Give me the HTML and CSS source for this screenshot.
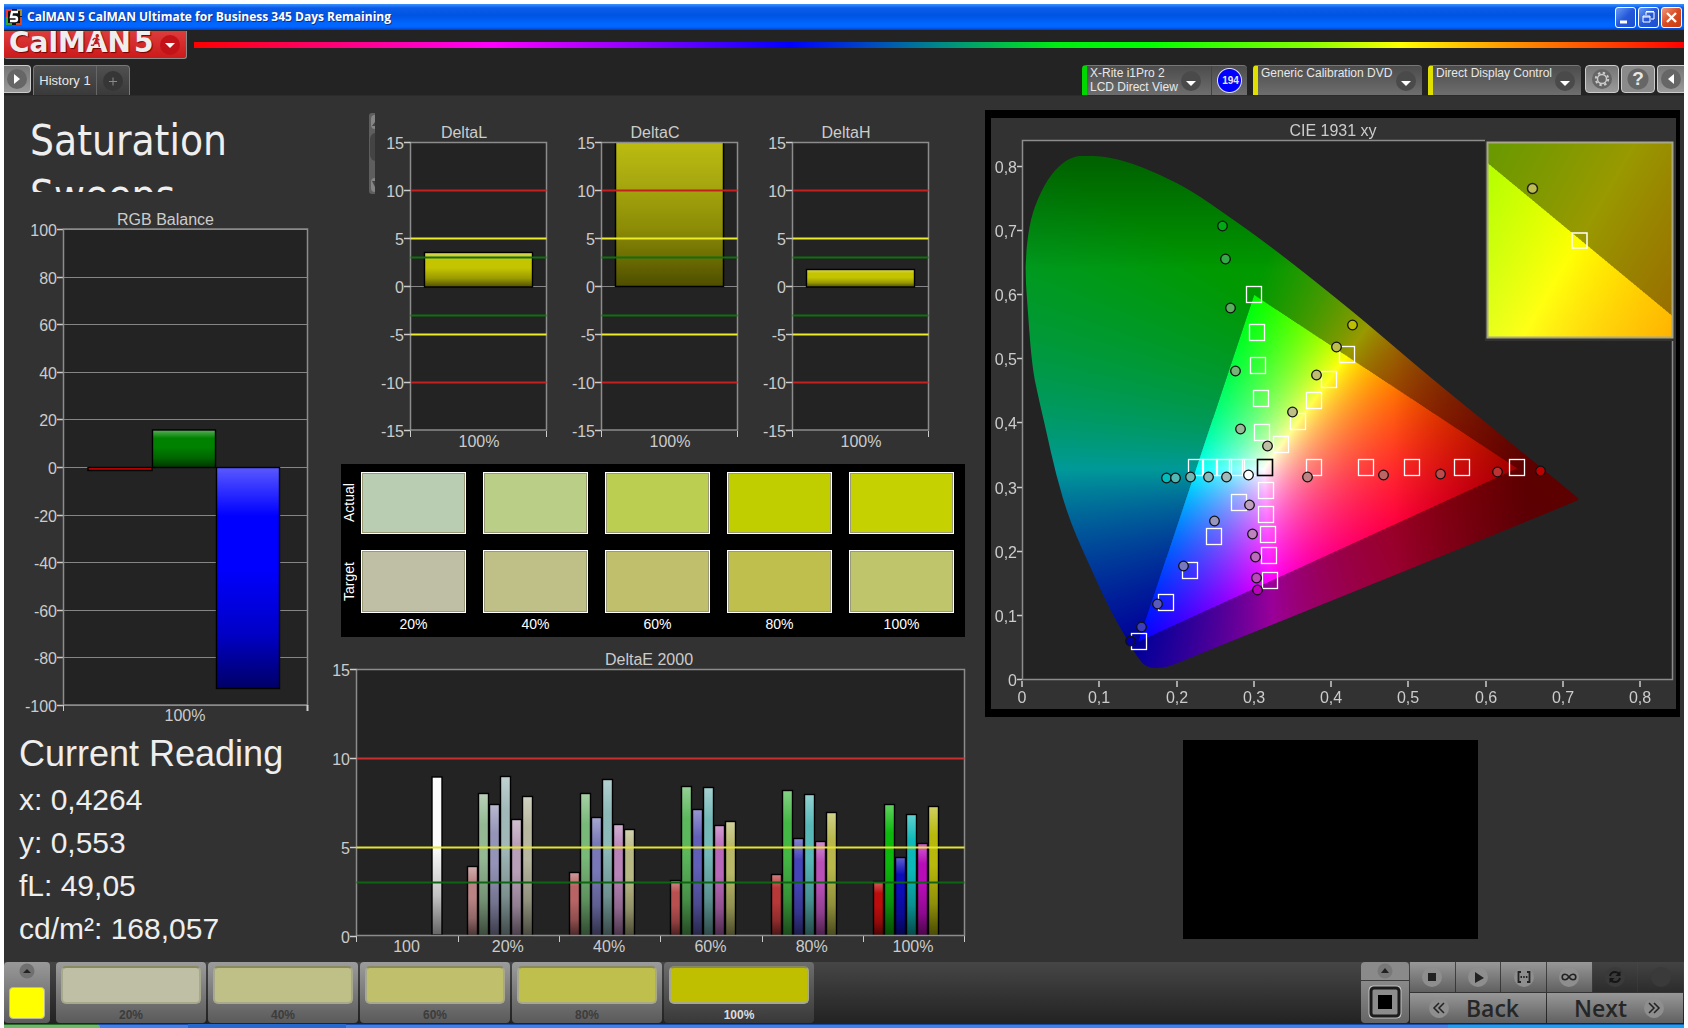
FILE: index.html
```html
<!DOCTYPE html>
<html lang="en">
<head>
<meta charset="utf-8">
<title>CalMAN 5</title>
<link rel="stylesheet" href="styles.css">
</head>
<body>
<div class="window">
  <header class="titlebar">
    <svg class="app-icon" viewBox="0 0 16 16"><rect width="16" height="16" fill="#111"/><path d="M0 0h6v2H2v6H0z" fill="#e33"/><path d="M0 8h2v6h4v2H0z" fill="#3a3"/><path d="M16 8h-2v6h-4v2h6z" fill="#d42"/><path d="M16 0h-5v2h3v5h2z" fill="#a82"/><path d="M12 3H6L5 8h4q2 0 2 2t-2 2H4" fill="none" stroke="#fff" stroke-width="2.4"/></svg>
    <h1 class="titlebar-text">CalMAN 5 CalMAN Ultimate for Business 345 Days Remaining</h1>
    <button class="win-btn" aria-label="Minimize"><svg viewBox="0 0 21 21"><path d="M5 15h7" stroke="#fff" stroke-width="3"/></svg></button>
    <button class="win-btn" aria-label="Restore"><svg viewBox="0 0 21 21" fill="none" stroke="#fff"><path d="M8 8V5h8v7h-3M8 4.500h8"/><path d="M5 9h7v6H5zM5 10h7"/></svg></button>
    <button class="win-btn win-close" aria-label="Close"><svg viewBox="0 0 21 21"><path d="M6 6l9 9M15 6l-9 9" stroke="#fff" stroke-width="2.400"/></svg></button>
  </header>

  <div class="brandbar">
    <button class="logo"><span class="logo-text">CalMAN</span><span class="logo-five">5</span>
      <svg class="runner" viewBox="0 0 14 16" fill="none" stroke="#c8201e" stroke-width="1.600"><circle cx="8.500" cy="2" r="1.300" fill="#c8201e"/><path d="M8 4L6 9l4 2 1 4M6 9l-2 4H1M3 7l2-2h3l3 2"/></svg>
      <svg class="round-arrow" viewBox="0 0 20 20"><circle cx="10" cy="10" r="10" fill="#c41219"/><path d="M5 8h10l-5 5z" fill="#fff"/></svg>
    </button>
    <div class="rainbow"></div>
  </div>

  <nav class="tabbar">
    <button class="sq-btn sq-left" aria-label="Expand"><svg viewBox="0 0 20 20"><circle cx="10" cy="10" r="10" fill="#666"/><path d="M7 5v10l6-5z" fill="#fff"/></svg></button>
    <div class="tabs">
      <button class="tab">History 1</button>
      <button class="tab tab-add" aria-label="Add"><svg viewBox="0 0 20 20"><circle cx="10" cy="10" r="10" fill="#363636"/><path d="M6 10.500h8M10 6.500v8" stroke="#8a8a8a"/></svg></button>
    </div>
    <div class="device device-meter">
      <button class="device-name">X-Rite i1Pro 2<br>LCD Direct View</button>
      <svg class="drop" viewBox="0 0 20 22"><circle cx="10" cy="10" r="10" fill="#4a4a4a"/><path d="M5 10h10l-5 5z" fill="#fff"/></svg>
      <span class="badge">194</span>
    </div>
    <div class="device device-source">
      <button class="device-name">Generic Calibration DVD</button>
      <svg class="drop" viewBox="0 0 20 22"><circle cx="10" cy="10" r="10" fill="#4a4a4a"/><path d="M5 10h10l-5 5z" fill="#fff"/></svg>
    </div>
    <div class="device device-display">
      <button class="device-name">Direct Display Control</button>
      <svg class="drop" viewBox="0 0 20 22"><circle cx="10" cy="10" r="10" fill="#4a4a4a"/><path d="M5 10h10l-5 5z" fill="#fff"/></svg>
    </div>
    <button class="sq-btn" aria-label="Settings"><svg viewBox="0 0 20 20"><circle cx="10" cy="10" r="10" fill="#666"/><circle cx="10" cy="10" r="4.500" fill="none" stroke="#ccc" stroke-width="1.500"/><circle cx="10" cy="10" r="6.200" fill="none" stroke="#ccc" stroke-width="2" stroke-dasharray="2.400 2.470"/></svg></button>
    <button class="sq-btn sq-help" aria-label="Help">?</button>
    <button class="sq-btn sq-right" aria-label="Collapse"><svg viewBox="0 0 20 20"><circle cx="10" cy="10" r="10" fill="#666"/><path d="M13 5v10l-6-5z" fill="#fff"/></svg></button>
  </nav>

  <main class="workspace">
    <section class="col-left">
      <h2 class="page-title">Saturation<br>Sweeps</h2>
      <svg id="rgb-balance" class="chart" viewBox="4 205 337 525"></svg>
      <div class="reading">
        <h3>Current Reading</h3>
        <p>x: 0,4264</p>
        <p>y: 0,553</p>
        <p>fL: 49,05</p>
        <p>cd/m²: 168,057</p>
      </div>
    </section>

    <section class="col-mid">
      <div class="deltas">
        <svg class="mini-scroll" viewBox="0 0 6 81"><rect width="10" height="81" rx="3" fill="#5e5e5e"/><rect x="2" y="2" width="10" height="14" rx="4" fill="#858585"/><path d="M6 9v4H3z" fill="#444"/><rect x="1" y="20" width="12" height="28" rx="6" fill="#444"/><rect x="2" y="65" width="10" height="14" rx="4" fill="#858585"/><path d="M6 68v6l-3-6z" fill="#444"/></svg>
        <svg id="delta-l" class="chart" viewBox="375 113 191 351"></svg>
        <svg id="delta-c" class="chart" viewBox="375 113 191 351"></svg>
        <svg id="delta-h" class="chart" viewBox="375 113 191 351"></svg>
      </div>
      <div class="patches">
        <span class="row-label">Actual</span>
        <i class="patch p1"></i><i class="patch p2"></i><i class="patch p3"></i><i class="patch p4"></i><i class="patch p5"></i>
        <span class="row-label">Target</span>
        <i class="patch t1"></i><i class="patch t2"></i><i class="patch t3"></i><i class="patch t4"></i><i class="patch t5"></i>
        <span></span>
        <span class="col-label">20%</span><span class="col-label">40%</span><span class="col-label">60%</span><span class="col-label">80%</span><span class="col-label">100%</span>
      </div>
      <svg id="delta-e" class="chart chart-wide" viewBox="341 645 624 317"></svg>
    </section>

    <section class="col-right">
      <div class="cie-panel">
        <svg id="cie" class="chart" viewBox="991 118 685 591">
          <foreignObject x="1023" y="141" width="650" height="539"><canvas id="gamut" class="gamut" width="650" height="539"></canvas></foreignObject>
          <g id="cie-axes"></g>
          <g id="cie-marks"></g>
          <rect x="1485" y="138" width="191" height="203" fill="#323232"/>
          <foreignObject x="1488" y="143" width="184" height="194"><canvas id="inset" class="gamut" width="184" height="194"></canvas></foreignObject>
          <rect x="1487.500" y="142.500" width="185" height="195" fill="none" stroke="#a8a888" stroke-width="2"/>
          <circle cx="1532.500" cy="188.500" r="5" fill="#bebe50" stroke="#222" stroke-width="1.500"/>
          <rect x="1572" y="233" width="15" height="15" fill="none" stroke="#fff" stroke-width="1.500"/>
        </svg>
      </div>
      <div class="preview"></div>
    </section>
  </main>

  <footer class="dock">
    <button class="picker" aria-label="Pattern color"><svg viewBox="0 0 16 16"><circle cx="8" cy="8" r="7.500" fill="#707070"/><path d="M4 10h8L8 6z" fill="#222"/></svg><i class="picker-color"></i></button>
    <button class="level"><i class="level-color t1"></i>20%</button>
    <button class="level"><i class="level-color t2"></i>40%</button>
    <button class="level"><i class="level-color t3"></i>60%</button>
    <button class="level"><i class="level-color t4"></i>80%</button>
    <button class="level level-on"><i class="level-color l5"></i>100%</button>
    <div class="transport">
      <div class="window-size">
        <button class="up" aria-label="More"><svg viewBox="0 0 16 16"><circle cx="8" cy="8" r="7.500" fill="#787878"/><path d="M4 10h8L8 5z" fill="#222"/></svg></button>
        <button class="pattern" aria-label="Pattern window"><svg viewBox="0 0 34 34"><rect x="1" y="1" width="32" height="32" rx="4" fill="#a2a2a2" stroke="#c4c4c4"/><rect x="3" y="3" width="28" height="28" rx="3" fill="#8d8d8d" stroke="#1c1c1c" stroke-width="3"/><rect x="10" y="10" width="14" height="14" fill="#000"/></svg></button>
      </div>
      <div class="controls">
        <button class="ctl" aria-label="Stop"><svg viewBox="0 0 20 20"><circle cx="10" cy="10" r="10"/><path d="M6 6h8v8H6z" fill="#222"/></svg></button>
        <button class="ctl" aria-label="Read"><svg viewBox="0 0 20 20"><circle cx="10" cy="10" r="10"/><path d="M7 5v11l9-5z" fill="#222"/></svg></button>
        <button class="ctl" aria-label="Read series"><svg viewBox="0 0 20 20"><circle cx="10" cy="10" r="10"/><path d="M7 5H4.500v10H7M13 5h2.500v10H13" fill="none" stroke="#222" stroke-width="1.800"/><path d="M6.500 10h7" stroke="#222" stroke-width="2" stroke-dasharray="1.500 1.200"/></svg></button>
        <button class="ctl" aria-label="Continuous"><svg viewBox="0 0 20 20"><circle cx="10" cy="10" r="10"/><path d="M10 10q-2-2.800-4-2.800a2.800 2.800 0 0 0 0 5.600q2 0 4-2.800t4-2.800a2.800 2.800 0 0 1 0 5.600q-2 0-4-2.800z" fill="none" stroke="#222" stroke-width="1.600"/></svg></button>
        <button class="ctl ctl-off" aria-label="Refresh"><svg viewBox="0 0 20 20"><circle cx="10" cy="10" r="10"/><path d="M5 9q1-4 5-4 3 0 4 2M15 11q-1 4-5 4-3 0-4-2" fill="none" stroke="#151515" stroke-width="2"/><path d="M15.500 4v5h-5zM4.500 16v-5h5z" fill="#151515"/></svg></button>
        <button class="ctl ctl-off" aria-label="Record"><svg viewBox="0 0 20 20"><circle cx="10" cy="10" r="10"/></svg></button>
        <button class="step step-back"><svg viewBox="0 0 20 20"><circle cx="10" cy="10" r="10"/><path d="M10 5l-5 5 5 5M15 5l-5 5 5 5" fill="none" stroke="#222" stroke-width="1.500"/></svg>Back</button>
        <button class="step step-next">Next<svg viewBox="0 0 20 20"><circle cx="10" cy="10" r="10"/><path d="M5 5l5 5-5 5M10 5l5 5-5 5" fill="none" stroke="#222" stroke-width="1.500"/></svg></button>
      </div>
    </div>
  </footer>
  <div class="taskbar"><i class="start"></i><i class="task"></i><i class="tray"></i></div>
</div>
<script src="charts.js"></script>
</body>
</html>
```

FILE: styles.css
```css
* { box-sizing: border-box; }
body { margin: 0; background: #fff; font-family: "Liberation Sans", Arial, sans-serif; color: #e8e8e8; }
button { font: inherit; color: inherit; border: 0; margin: 0; padding: 0; background: none; }
svg { display: block; }
h1, h2, h3, p { margin: 0; font-weight: normal; }

.window { min-height: 100vh; padding: 4px 4px 0; display: flex; flex-direction: column; background: #fff; }

.titlebar { height: 26px; display: flex; align-items: center; gap: 2px; padding: 0 2px; background: linear-gradient(#3a93ff 0, #0a5ce8 15%, #0054e3 45%, #0066ff 75%, #0066ff 88%, #0040c8 100%); }
.app-icon { width: 16px; height: 16px; }
.titlebar-text { flex: 1; padding-left: 3px; font: bold 12px/20px "Open Sans", "Noto Sans", sans-serif; color: #fff; text-shadow: 1px 1px #10308a; white-space: nowrap; }
.win-btn { width: 21px; height: 21px; border: 1px solid #fff; border-radius: 3px; background: linear-gradient(135deg, #6a9cf5, #2458d8 50%, #1c50d0); }
.win-btn svg { margin: -1px; width: 21px; height: 21px; }
.win-close { background: linear-gradient(135deg, #f09a80, #d84a20 50%, #c83c10); }

.brandbar { height: 35px; background: #232323; display: flex; align-items: flex-start; gap: 7px; }
.logo { position: relative; width: 183px; height: 28px; margin-top: 1px; padding: 0 6px 0 5px; display: flex; align-items: center; overflow: hidden; border: solid #8a8a8a; border-width: 0 1px 1px 0; border-radius: 0 0 3px 3px; background: linear-gradient(#dc3c3c, #cc1a1a); font: bold 28px/22px "DejaVu Sans", sans-serif; color: #eee; text-shadow: 1px 1px 1px #700; }
.logo-text, .logo-five { margin-top: -3px; }
.logo-five { padding-left: 3px; }
.round-arrow { width: 20px; height: 20px; margin-left: auto; }
.runner { position: absolute; left: 86px; top: 3px; width: 12px; height: 14px; }
.rainbow { flex: 1; height: 6px; margin-top: 12px; background: linear-gradient(90deg, #f00, #f0f 20%, #80f 30%, #00f 40%, #088 50%, #0e1 58%, #0f0 64%, #8f0 75%, #ff0 81%, #f90 88%, #f00); }

.tabbar { height: 31px; background: #232323; border-bottom: 1px solid #2b2b2b; display: flex; align-items: flex-start; }
.sq-btn { width: 34px; height: 28px; margin-left: 2px; border: 1px solid #ccc; border-radius: 4px; background: linear-gradient(#757575, #9a9a9a); display: flex; align-items: center; justify-content: center; }
.sq-btn svg { width: 20px; height: 20px; }
.sq-help { font: bold 19px/20px "Liberation Sans", sans-serif; background: radial-gradient(circle, #666 10px, #8a8a8a 11px); }
.sq-left { width: 27px; margin-left: 0; border-left: 0; border-radius: 0 4px 4px 0; }
.sq-right { width: 27px; border-right: 0; border-radius: 4px 0 0 4px; }
.tabs { display: flex; height: 30px; margin: 0 auto 0 2px; border: 1px solid #777; border-bottom: 0; border-radius: 4px 4px 0 0; background: linear-gradient(#505050, #3a3a3a); }
.tab { width: 62px; font-size: 13px; }
.tab-add { width: 33px; border-left: 1px solid #666; display: flex; align-items: center; justify-content: center; }
.tab-add svg { width: 20px; height: 20px; }
.device { height: 30px; display: flex; border-top: 1px solid #777; border-left: 5px solid #e0e000; border-radius: 4px 4px 0 0; background: linear-gradient(#4c4c4c, #6e6e6e); font-size: 12px; line-height: 14px; }
.device-name { flex: 1; padding-left: 3px; text-align: left; align-self: flex-start; white-space: nowrap; }
.drop { flex: none; width: 20px; height: 22px; margin: 5px 6px 0 0; }
.device-meter { width: 165px; border-left-color: #00d800; }
.device-meter .drop { margin-right: 8px; }
.device-source { width: 169px; margin-left: 6px; }
.device-display { width: 153px; margin: 0 2px 0 6px; }
.badge { width: 36px; margin-left: 2px; padding-left: 2px; border-left: 1px solid #444; display: flex; align-items: center; justify-content: center; font-size: 10px; font-weight: bold; background: radial-gradient(circle, #00f 11px, #ddf 12px, transparent 13px); }

.workspace { flex: 1; background: #323232; display: grid; grid-template-columns: minmax(0, 337fr) minmax(0, 624fr) minmax(0, 715fr); padding: 0 4px 0 0; }
.chart { width: 100%; height: auto; overflow: visible; }
.chart text { font-size: 16px; fill: #ccc; }
.page-title { height: 96px; margin-bottom: 13px; padding: 17px 0 0 26px; overflow: hidden; font: 42px/55px "DejaVu Sans Condensed", "Noto Sans", sans-serif; color: #eee; }
.reading { padding-left: 15px; font-size: 30px; line-height: 43px; color: #eee; }
.reading h3 { font-size: 36px; line-height: 48px; }

.deltas { display: flex; align-items: flex-start; padding: 17px 17px 0 28px; }
.deltas .chart { flex: 1; min-width: 0; }
.mini-scroll { width: 6px; height: 81px; flex: none; }
.patches { display: grid; grid-template: 62px 63px 22px / 3px repeat(5, minmax(0, 1fr)); gap: 16px 17px; padding: 8px 11px 0 0; background: #000; color: #fff; font-size: 14px; height: 173px; }
.row-label { writing-mode: vertical-rl; rotate: 180deg; width: 16px; line-height: 16px; text-align: center; }
.patch { border: 1px solid #fff; box-shadow: inset 0 0 0 1px #9a9a78; }
.col-label { text-align: center; line-height: 20px; margin-top: -15px; }
.p1 { background: #b9cdb3; }
.p2 { background: #bbce88; }
.p3 { background: #bcce52; }
.p4 { background: #c0ce00; }
.p5 { background: #c5d100; }
.t1 { background: #bfbfa5; }
.t2 { background: #bfbf88; }
.t3 { background: #bfbf6c; }
.t4 { background: #bfbf4e; }
.t5 { background: #bfc56a; }
.l5 { background: #bfbf00; }
.chart-wide { margin-top: 8px; }

.col-right { padding: 14px 0 0 20px; }
.cie-panel { border: solid #000; border-width: 8px 4px 8px 6px; }
.gamut { display: block; width: 100%; height: 100%; }
.preview { width: 42.4%; aspect-ratio: 294 / 199; margin: 23px 0 0 28.5%; background: #000; }

.dock { height: 62px; padding-bottom: 1px; display: flex; gap: 2px; background: linear-gradient(#464646, #222); font: bold 12px/16px "Liberation Sans", sans-serif; color: #3c3c3c; }
.picker { width: 46px; margin-right: 4px; border-radius: 4px; background: linear-gradient(#999, #5c5c5c); display: flex; flex-direction: column; align-items: center; }
.picker svg { width: 16px; height: 16px; margin: 1px 0 8px; }
.picker-color { width: 36px; height: 32px; border: 1px solid #b8b8a0; border-radius: 4px; background: #ff0; }
.level { width: 150px; padding: 4px 5px 0; border-radius: 4px; background: linear-gradient(#9c9c9c, #5a5a5a); }
.level-color { display: block; height: 38px; margin-bottom: 3px; border: 2px solid #a8a88c; border-top-color: #8a8a60; border-radius: 5px; }
.level-on { background: linear-gradient(#6e6e6e, #383838); color: #ddd; }
.transport { margin-left: auto; display: flex; gap: 1px; padding-right: 1px; }
.window-size { width: 48px; display: flex; flex-direction: column; gap: 1px; }
.up, .pattern { display: flex; align-items: center; justify-content: center; background: #8a8a8a; }
.up { height: 18px; border-radius: 4px 4px 0 0; }
.up svg { width: 16px; height: 16px; }
.pattern { flex: 1; border-radius: 0 0 4px 4px; background: linear-gradient(#8a8a8a, #666); }
.pattern svg { width: 34px; height: 34px; }
.controls { display: grid; grid-template-columns: repeat(6, 1fr); grid-template-rows: 30px 30px; gap: 1px; width: 273px; }
.ctl, .step { display: flex; align-items: center; justify-content: center; background: linear-gradient(#989898, #606060); fill: #8e8e8e; }
.ctl svg, .step svg { width: 20px; height: 20px; }
.ctl-off { background: linear-gradient(#434343, #2c2c2c); fill: #3a3a3a; }
.step { grid-column: span 3; gap: 17px; font: 600 23px/28px "Open Sans", sans-serif; color: #262626; }
.step-back { padding-right: 8px; }
.step-next { padding-left: 8px; }
.taskbar { height: 4px; display: flex; background: linear-gradient(#1c4ca8 1px, #3c82ea 1px); }
.start { width: 96px; background: linear-gradient(#2a6a2a 1px, #6aba6a 1px); border-radius: 0 4px 0 0; }
.task { width: 158px; margin-left: 88px; background: #2468d0; }
.tray { width: 236px; margin-left: auto; background: linear-gradient(#1060b0 1px, #18a0f4 1px); }
```

FILE: charts.js
```js
const NS = 'http://www.w3.org/2000/svg';

function add(parent, name, attrs, text) {
  const el = document.createElementNS(NS, name);
  for (const k in attrs) el.setAttribute(k, attrs[k]);
  if (text !== undefined) el.textContent = text;
  parent.appendChild(el);
  return el;
}
const line = (p, x1, y1, x2, y2, stroke, w) =>
  add(p, 'line', { x1, y1, x2, y2, stroke, 'stroke-width': w || 1 });
const label = (p, x, y, text, anchor) =>
  add(p, 'text', { x, y, 'text-anchor': anchor || 'middle' }, text);

// glossy vertical shading laid over every bar
function shade(svg) {
  const id = svg.id + '-shade';
  const g = add(add(svg, 'defs', {}), 'linearGradient', { id, x1: 0, y1: 0, x2: 0, y2: 1 });
  [[0, '#fff', .35], [.22, '#fff', 0], [.45, '#000', 0], [.75, '#000', .22], [1, '#000', .6]].forEach(s =>
    add(g, 'stop', { offset: s[0], 'stop-color': s[1], 'stop-opacity': s[2] }));
  return id;
}
function bar(svg, id, x, y, width, height, fill) {
  add(svg, 'rect', { x, y, width, height, fill });
  add(svg, 'rect', { x, y, width, height, fill: 'url(#' + id + ')', stroke: '#000', 'stroke-width': 1.4 });
}
function frame(svg, x, y, width, height) {
  add(svg, 'rect', { x, y, width, height, fill: 'none', stroke: '#8c8c8c', 'stroke-width': 1.5 });
}
function ground(svg, x, y, width, height) {
  add(svg, 'rect', { x, y, width, height, fill: '#232323' });
}

function rgbBalance() {
  const s = document.getElementById('rgb-balance'), id = shade(s);
  const L = 63.5, R = 307.5, Z = 467, k = 2.38;
  ground(s, L, 229, R - L, 476);
  for (let v = 100; v >= -100; v -= 20) {
    const y = Math.round(Z - v * k) + .5;
    line(s, L, y, R, y, '#858585', 1.2);
    line(s, 57, y, L, y, '#ccc', 1.5);
    label(s, 57, y + 6, v, 'end');
  }
  frame(s, L, 229, R - L, 476);
  line(s, L, 705, L, 711, '#ccc');
  line(s, R, 705, R, 711, '#ccc', 2);
  bar(s, id, 88, 467.5, 64, 3, '#e00000');
  bar(s, id, 152.5, 430, 63, 37.5, '#008200');
  bar(s, id, 216.5, 467.5, 63, 221, '#0000ff');
  label(s, 165.5, 225, 'RGB Balance');
  label(s, 185, 721, '100%');
}

function delta(elId, title, top, tall) {
  const s = document.getElementById(elId), id = shade(s);
  const L = 410.5, R = 546.5, y = v => Math.round(286 - v * 9.6) + .5;
  ground(s, L, 143, R - L, 287);
  line(s, L, y(0), R, y(0), '#858585', 1.2);
  if (tall) {
    const g = add(s.firstChild, 'linearGradient', { id: 'tall', x1: 0, y1: 0, x2: 0, y2: 1 });
    [[0, '#bcbc10'], [.25, '#aaaa10'], [.6, '#8c8c06'], [1, '#4e4e00']].forEach(c => add(g, 'stop', { offset: c[0], 'stop-color': c[1] }));
    add(s, 'rect', { x: 424.5, y: 142, width: 108, height: 144, fill: 'url(#tall)' });
    add(s, 'path', { d: 'M424.500 142V286.500H532.500V142', fill: 'none', stroke: '#000', 'stroke-width': 1.5 });
  } else {
    bar(s, id, 424.5, top, 108, 287 - top, '#c4c400');
  }
  frame(s, L, 142.5, R - L, 287.5);
  [[10, '#c42020'], [5, '#ecec28'], [3, '#107010'], [-3, '#107010'], [-5, '#ecec28'], [-10, '#c42020']].forEach(t =>
    line(s, L, y(t[0]), R, y(t[0]), t[1], 1.8));
  for (let v = 15; v >= -15; v -= 5) {
    line(s, 404, y(v), L, y(v), '#ccc', 1.5);
    label(s, 404, y(v) + 6, v, 'end');
  }
  line(s, L, 431, L, 437, '#ccc');
  line(s, R, 431, R, 437, '#ccc');
  label(s, 464, 138, title);
  label(s, 479, 447, '100%');
}

function deltaE() {
  const s = document.getElementById('delta-e'), id = shade(s);
  const L = 356.5, R = 964.5, B = 935.5, y = v => Math.round(B - v * 17.75) + .5;
  const groups = [
    ['20%', [3.9, 8.05, 7.4, 9, 6.55, 7.85], ['#ba8484', '#94b894', '#9494b8', '#a0b8b8', '#b8a0b8', '#b8b8a0']],
    ['40%', [3.55, 8.05, 6.65, 8.8, 6.3, 6], ['#b86464', '#78b878', '#7878b8', '#8cb8b8', '#b884b8', '#b8b884']],
    ['60%', [3.15, 8.45, 7.15, 8.35, 6.2, 6.45], ['#b85050', '#5cb85c', '#6060b8', '#74b8b8', '#b868b8', '#b8b868']],
    ['80%', [3.45, 8.2, 5.5, 7.95, 5.35, 6.95], ['#b83838', '#44b844', '#4444b8', '#58b8b8', '#b850b8', '#b8b84c']],
    ['100%', [3.05, 7.4, 4.45, 6.85, 5.2, 7.3], ['#bc0c0c', '#0cb80c', '#0c0cb8', '#0cb8b8', '#b80cb8', '#b8b80c']]
  ];
  ground(s, L, 669, R - L, 267);
  bar(s, id, 432, 777, 10, 158, '#fafafa');
  label(s, 406.5, 952, '100');
  line(s, L, 936, L, 942, '#ccc');
  groups.forEach((g, i) => {
    const x = L + 101.3 * (i + 1);
    g[1].forEach((v, j) => bar(s, id, Math.round(x + 9.5 + j * 11) + .5, y(v), 10, B - y(v), g[2][j]));
    line(s, Math.round(x) + .5, 936, Math.round(x) + .5, 942, '#ccc');
    label(s, x + 50, 952, g[0]);
  });
  line(s, R, 936, R, 942, '#ccc');
  frame(s, L, 669.5, R - L, 266);
  line(s, L, y(10), R, y(10), '#c83030', 2);
  line(s, L, y(5), R, y(5), '#e4e430', 2);
  line(s, L, y(3), R, y(3), '#0f6414', 2);
  [0, 5, 10, 15].forEach(v => {
    line(s, 350, y(v), L, y(v), '#ccc', 1.5);
    label(s, 350, y(v) + 6, v, 'end');
  });
  label(s, 649, 665, 'DeltaE 2000');
}

// chromaticity to display colour, dimmed outside the Rec.709 triangle
function colour(x, y) {
  const X = x / y, Z = (1 - x - y) / y;
  let r = 3.2406 * X - 1.5372 - .4986 * Z;
  let g = -.9689 * X + 1.8758 + .0415 * Z;
  let b = .0557 * X - .2040 + 1.0570 * Z;
  const outside = r < 0 || g < 0 || b < 0;
  r = Math.max(r, 0); g = Math.max(g, 0); b = Math.max(b, 0);
  const m = 255 / Math.max(r, g, b);
  let f = outside ? .6 : 1;
  f *= 1 - .4 * Math.min(1, Math.max(0, (x - .48) / .17));
  f *= 1 - .36 * Math.min(1, Math.max(0, (y - .64) / .17));
  return [r * m * f, g * m * f, b * m * f];
}
// four samples per pixel keep the triangle edges smooth
function paint(canvas, toX, toY) {
  const c = canvas.getContext('2d'), w = canvas.width, h = canvas.height;
  const img = c.createImageData(w, h);
  for (let j = 0; j < h; j++) for (let i = 0; i < w; i++) {
    const o = (j * w + i) * 4, sum = [0, 0, 0];
    for (const dx of [.25, .75]) for (const dy of [.25, .75]) {
      const p = colour(toX(i + dx), Math.max(toY(j + dy), .002));
      for (let n = 0; n < 3; n++) sum[n] += p[n] / 4;
    }
    for (let n = 0; n < 3; n++) img.data[o + n] = sum[n];
    img.data[o + 3] = 255;
  }
  c.putImageData(img, 0, 0);
  return c;
}

function cie() {
  const ox = 1022.5, oy = 680, kx = 772.6, ky = 641.5;
  const c = paint(document.getElementById('gamut'), i => (i + 1023 - ox) / kx, j => (oy - 141 - j) / ky);
  const locus = [[1084, 156], [1102, 156], [1129, 162], [1161, 175], [1192, 191], [1228, 216], [1255, 235], [1296, 266], [1352, 311], [1377, 332], [1431, 378], [1495, 430], [1577, 497], [1579, 499], [1577, 501], [1400, 573], [1180, 662], [1165, 668], [1147, 668], [1138, 658], [1129, 643], [1110, 610], [1093, 573], [1070, 522], [1056, 475], [1046, 430], [1039, 400], [1032, 367], [1027, 300], [1025, 267], [1028, 233], [1034, 207], [1048, 178], [1063, 162], [1076, 156]];
  c.globalCompositeOperation = 'destination-in';
  c.translate(-1023, -141);
  c.beginPath();
  const n = locus.length, mid = i => [(locus[i % n][0] + locus[(i + 1) % n][0]) / 2, (locus[i % n][1] + locus[(i + 1) % n][1]) / 2];
  c.moveTo(...mid(0));
  for (let i = 1; i <= n; i++) c.quadraticCurveTo(...locus[i % n], ...mid(i));
  c.fill();
  c.globalCompositeOperation = 'destination-over';
  c.fillStyle = '#232323';
  c.fillRect(1023, 141, 650, 539);
  paint(document.getElementById('inset'), i => .4193 + (i - 91.5) / 3550, j => .5053 - (j - 96) / 3700);

  const a = document.getElementById('cie-axes');
  frame(a, ox, 140.5, 650, 539);
  label(a, 1333, 136, 'CIE 1931 xy');
  for (let i = 0; i <= 8; i++) {
    const t = i ? '0,' + i : '0', x = Math.round(ox + i * kx / 10 - .5), y = Math.round(679 - i * ky / 10) + .5;
    line(a, x, 681, x, 687, '#ccc', 1.5);
    label(a, x, 703, t);
    line(a, 1017, y, 1022, y, '#ccc', 1.5);
    label(a, 1017, y + 6, t, 'end');
  }

  const m = document.getElementById('cie-marks');
  const targets = [[1254, 295], [1257, 333], [1258, 366], [1261, 399], [1262, 433], [1347, 355], [1329, 380], [1314, 401], [1298, 422], [1281, 445], [1314, 468], [1366, 468], [1412, 468], [1462, 468], [1517, 468], [1196, 468], [1210, 468], [1224, 468], [1237, 468], [1250, 468], [1266, 491], [1266, 515], [1268, 535], [1269, 556], [1270, 581], [1239, 503], [1214, 537], [1190, 571], [1166, 603], [1139, 642]];
  targets.forEach(p => add(m, 'rect', { x: p[0] - 7.5, y: p[1] - 8.5, width: 15, height: 16, fill: 'none', stroke: '#fff', 'stroke-width': 1.3 }));
  add(m, 'rect', { x: 1257.5, y: 459.5, width: 15, height: 16, fill: 'none', stroke: '#000', 'stroke-width': 1.6 });
  const readings = [
    [1222, 226, '#00aa14'], [1225, 259, '#32aa46'], [1230, 308, '#5aaf5f'], [1235, 371, '#78b478'], [1240, 429, '#96b996'],
    [1352, 325, '#bebe00'], [1336, 347, '#bebe4b'], [1316, 375, '#bebe6e'], [1292, 412, '#bebe87'], [1267, 446, '#bebea5'],
    [1166, 478, '#00bebe'], [1175, 478, '#50b9b4'], [1190, 477, '#6eb9b4'], [1208, 477, '#8cb9b9'], [1226, 477, '#a0b9b9'],
    [1307, 477, '#be8282'], [1383, 475, '#be6464'], [1440, 474, '#be4b4b'], [1497, 472, '#be3232'], [1540, 471, '#be0000'],
    [1249, 505, '#bea0be'], [1252, 534, '#be82be'], [1255, 557, '#be69be'], [1256, 578, '#be46be'], [1257, 590, '#be00be'],
    [1214, 521, '#9696be'], [1183, 566, '#7878be'], [1157, 604, '#5a5abe'], [1141, 627, '#3c3cbe'], [1130, 641, '#0000a0'], [1248, 475, '#fff']];
  readings.forEach(p => add(m, 'circle', { cx: p[0] + .5, cy: p[1], r: 4.8, fill: p[2], stroke: '#111', 'stroke-width': 1.3 }));
}

rgbBalance();
delta('delta-l', 'DeltaL', 252.5);
delta('delta-c', 'DeltaC', 142, true);
delta('delta-h', 'DeltaH', 269.5);
deltaE();
cie();
```
